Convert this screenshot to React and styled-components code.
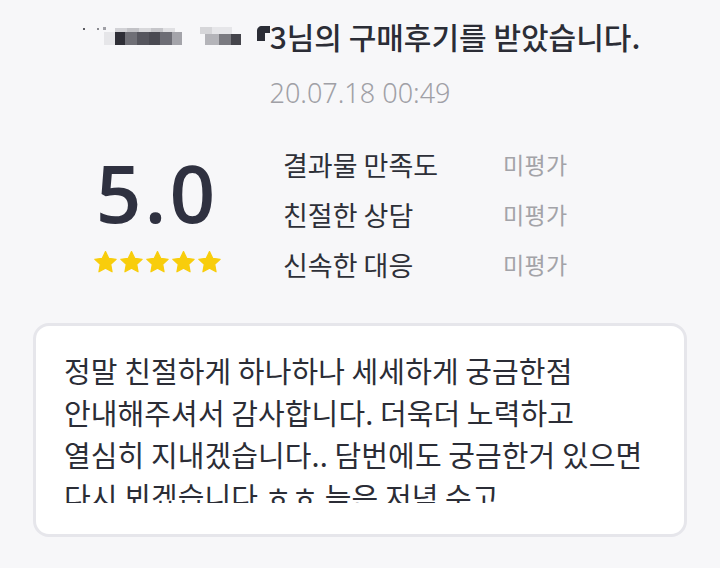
import React from "react";
import styled, { createGlobalStyle } from "styled-components";

const GlobalStyle = createGlobalStyle`
    html, body {
        margin: 0;
        padding: 0;
        background: #f7f7f9;
    }
    body {
        font-family: "Noto Sans CJK KR", "Noto Sans", sans-serif;
    }
`;

const Page = styled.div`
    width: 720px;
    height: 568px;
    background: #f7f7f9;
    overflow: hidden;
    display: flex;
    flex-direction: column;
    align-items: center;
`;

const Header = styled.div`
    display: flex;
    flex-direction: column;
    align-items: center;
    padding-top: 16px;
`;

const Title = styled.h1`
    margin: 0;
    display: flex;
    align-items: center;
    font-size: 30px;
    font-weight: 500;
    line-height: 40px;
    color: #2b2d36;
    white-space: nowrap;
`;

const DateText = styled.div`
    margin-top: 22px;
    font-family: "Noto Sans", "Open Sans", sans-serif;
    font-size: 27px;
    font-weight: 300;
    line-height: 30px;
    color: #a0a0a6;
`;

const Summary = styled.div`
    width: 100%;
    box-sizing: border-box;
    display: flex;
    align-items: flex-start;
    padding: 0 0 0 92px;
    margin-top: 31px;
`;

const ScoreBlock = styled.div`
    width: 130px;
    display: flex;
    flex-direction: column;
    align-items: center;
    padding-top: 13px;
`;

const Score = styled.div`
    font-family: "Open Sans", "Noto Sans", sans-serif;
    font-size: 80px;
    font-weight: 600;
    line-height: 80px;
    color: #2f3140;
    letter-spacing: 3px;
`;

const Stars = styled.div`
    display: flex;
    gap: 1px;
    margin-top: 18px;
`;

const Criteria = styled.div`
    margin-left: 61px;
    display: flex;
    flex-direction: column;
`;

const CriteriaRow = styled.div`
    display: flex;
    align-items: center;
    height: 50px;
`;

const Label = styled.span`
    width: 220px;
    font-size: 27px;
    color: #2e3038;
`;

const Value = styled.span`
    font-size: 23px;
    color: #a3a3a8;
    letter-spacing: 0.3px;
`;

const Card = styled.div`
    margin-top: 34px;
    width: 654px;
    height: 214px;
    box-sizing: border-box;
    background: #ffffff;
    border: 3px solid #e6e6eb;
    border-radius: 16px;
    padding: 23px 26px 28px 28px;
`;

const ReviewText = styled.p`
    margin: 0;
    height: 154px;
    overflow: hidden;
    font-size: 29px;
    line-height: 42px;
    color: #2b2d36;
    letter-spacing: 0.1px;
`;

const Star = () => (
    <svg width="25" height="24" viewBox="0 0 24 23">
        <path
            d="M12 1.5l3.1 6.5 7.1.9-5.2 4.9 1.3 7.1L12 17.4l-6.3 3.5 1.3-7.1L1.8 8.9l7.1-.9z"
            fill="#f8cd0c"
            stroke="#f8cd0c"
            strokeWidth="1.2"
            strokeLinejoin="round"
        />
    </svg>
);

// pixelated (censored) part of the buyer name
const mosaic = [
    [3, 6, 2, 2, "#5c5c62"],
    [17, 6, 2, 2, "#8a8a90"],
    [23, 5, 3, 3, "#a0a0a6"],
    [35, 6, 12, 4, "#d2d2d6"],
    [47, 6, 12, 4, "#c2c2c6"],
    [59, 6, 12, 4, "#d8d8db"],
    [71, 6, 12, 4, "#c6c6ca"],
    [83, 6, 12, 4, "#e0e0e3"],
    [24, 10, 11, 13, "#e6e6e9"],
    [35, 10, 10, 13, "#2e2e36"],
    [45, 10, 12, 13, "#6f6f76"],
    [57, 10, 12, 13, "#55555d"],
    [69, 10, 11, 13, "#4a4a52"],
    [80, 10, 12, 13, "#6d6d75"],
    [92, 10, 10, 13, "#a4a4aa"],
    [120, 5, 12, 7, "#d6d6d9"],
    [132, 5, 20, 7, "#e6e6e9"],
    [125, 12, 14, 11, "#b4b4b9"],
    [139, 12, 12, 11, "#7a7a80"],
    [151, 12, 10, 11, "#45454c"],
];

const Mosaic = () => (
    <svg width="190" height="28" viewBox="0 0 190 28">
        {mosaic.map(([x, y, w, h, c], i) => (
            <rect key={i} x={x} y={y} width={w} height={h} fill={c} />
        ))}
        <path d="M177 9c0-3 2-5 5-5h8v7h-5v8h-8z" fill="#2b2d36" />
    </svg>
);

const criteria = ["결과물 만족도", "친절한 상담", "신속한 대응"];

export default function App() {
    return (
        <Page>
            <GlobalStyle />
            <Header>
                <Title>
                    <Mosaic />
                    3님의 구매후기를 받았습니다.
                </Title>
                <DateText>20.07.18 00:49</DateText>
            </Header>
            <Summary>
                <ScoreBlock>
                    <Score>5.0</Score>
                    <Stars>
                        {[0, 1, 2, 3, 4].map((i) => (
                            <Star key={i} />
                        ))}
                    </Stars>
                </ScoreBlock>
                <Criteria>
                    {criteria.map((c) => (
                        <CriteriaRow key={c}>
                            <Label>{c}</Label>
                            <Value>미평가</Value>
                        </CriteriaRow>
                    ))}
                </Criteria>
            </Summary>
            <Card>
                <ReviewText>
                    정말 친절하게 하나하나 세세하게 궁금한점
                    <br />
                    안내해주셔서 감사합니다. 더욱더 노력하고
                    <br />
                    열심히 지내겠습니다.. 담번에도 궁금한거 있으면
                    <br />
                    다시 뵈겠습니다 ㅎㅎ 늦은 저녁 수고
                </ReviewText>
            </Card>
        </Page>
    );
}
